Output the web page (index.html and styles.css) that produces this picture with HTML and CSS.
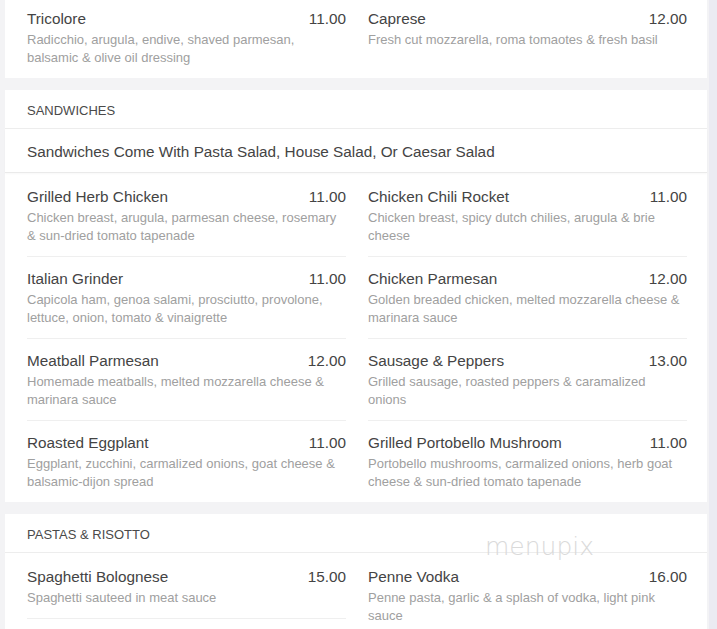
FILE: index.html
```html
<!DOCTYPE html>
<html>
<head>
<meta charset="utf-8">
<link rel="stylesheet" href="styles.css">
</head>
<body>
<div class="card card--top">
  <div class="grid">
    <div class="item">
      <div class="row"><span class="name">Tricolore</span><span class="price">11.00</span></div>
      <div class="desc">Radicchio, arugula, endive, shaved parmesan, balsamic &amp; olive oil dressing</div>
    </div>
    <div class="item">
      <div class="row"><span class="name">Caprese</span><span class="price">12.00</span></div>
      <div class="desc">Fresh cut mozzarella, roma tomaotes &amp; fresh basil</div>
    </div>
  </div>
</div>

<div class="card">
  <div class="head">SANDWICHES</div>
  <div class="sub">Sandwiches Come With Pasta Salad, House Salad, Or Caesar Salad</div>
  <div class="grid">
    <div class="item">
      <div class="row"><span class="name">Grilled Herb Chicken</span><span class="price">11.00</span></div>
      <div class="desc">Chicken breast, arugula, parmesan cheese, rosemary &amp; sun-dried tomato tapenade</div>
    </div>
    <div class="item">
      <div class="row"><span class="name">Chicken Chili Rocket</span><span class="price">11.00</span></div>
      <div class="desc">Chicken breast, spicy dutch chilies, arugula &amp; brie cheese</div>
    </div>
    <div class="item">
      <div class="row"><span class="name">Italian Grinder</span><span class="price">11.00</span></div>
      <div class="desc">Capicola ham, genoa salami, prosciutto, provolone, lettuce, onion, tomato &amp; vinaigrette</div>
    </div>
    <div class="item">
      <div class="row"><span class="name">Chicken Parmesan</span><span class="price">12.00</span></div>
      <div class="desc">Golden breaded chicken, melted mozzarella cheese &amp; marinara sauce</div>
    </div>
    <div class="item">
      <div class="row"><span class="name">Meatball Parmesan</span><span class="price">12.00</span></div>
      <div class="desc">Homemade meatballs, melted mozzarella cheese &amp; marinara sauce</div>
    </div>
    <div class="item">
      <div class="row"><span class="name">Sausage &amp; Peppers</span><span class="price">13.00</span></div>
      <div class="desc">Grilled sausage, roasted peppers &amp; caramalized onions</div>
    </div>
    <div class="item">
      <div class="row"><span class="name">Roasted Eggplant</span><span class="price">11.00</span></div>
      <div class="desc">Eggplant, zucchini, carmalized onions, goat cheese &amp; balsamic-dijon spread</div>
    </div>
    <div class="item">
      <div class="row"><span class="name">Grilled Portobello Mushroom</span><span class="price">11.00</span></div>
      <div class="desc">Portobello mushrooms, carmalized onions, herb goat cheese &amp; sun-dried tomato tapenade</div>
    </div>
  </div>
</div>

<div class="card card--pasta">
  <div class="head">PASTAS &amp; RISOTTO</div>
  <div class="grid">
    <div class="item item--sep">
      <div class="row"><span class="name">Spaghetti Bolognese</span><span class="price">15.00</span></div>
      <div class="desc">Spaghetti sauteed in meat sauce</div>
    </div>
    <div class="item item--sep">
      <div class="row"><span class="name">Penne Vodka</span><span class="price">16.00</span></div>
      <div class="desc">Penne pasta, garlic &amp; a splash of vodka, light pink sauce</div>
    </div>
  </div>
  <div class="watermark">menupix</div>
</div>
</body>
</html>
```

FILE: styles.css
```css
html {
  background: #ebebf2;
}
body {
  margin: 0 8px 0 0;
  padding: 0 2px 0 5px;
  min-height: 100vh;
  background: #f3f3f5;
  font-family: "Liberation Sans", Arial, sans-serif;
  color: #444;
}
.card {
  background: #fff;
  margin-bottom: 12px;
  position: relative;
}
.card--top .grid {
  padding-top: 0;
}
.card--top .item {
  padding-top: 9px;
}
.head {
  height: 35px;
  padding-top: 3px;
  line-height: 36px;
  padding-left: 22px;
  font-size: 13px;
  color: #4a4a4a;
  border-bottom: 1px solid #ededed;
}
.sub {
  padding: 13px 22px 10px;
  line-height: 20px;
  font-size: 15.3px;
  color: #444;
  border-bottom: 1px solid #eaeaea;
  box-shadow: 0 1px 2px rgba(0,0,0,0.03);
}
.grid {
  display: grid;
  grid-template-columns: 319px 319px;
  column-gap: 22px;
  padding: 2px 20px 0 22px;
  align-items: start;
}
.item {
  padding: 12px 0 11px;
  border-bottom: 1px solid #efefef;
}
.item:nth-last-child(-n+2) {
  border-bottom: none;
}
.item.item--sep {
  border-bottom: 1px solid #efefef;
}
.row {
  display: flex;
  justify-content: space-between;
  line-height: 20px;
  font-size: 15.3px;
  color: #444;
}
.desc {
  margin-top: 2px;
  font-size: 13px;
  line-height: 18px;
  color: #a0a0a0;
  padding-right: 4px;
}
.watermark {
  position: absolute;
  left: 480px;
  top: 18px;
  font-family: "DejaVu Sans", sans-serif;
  font-weight: 200;
  font-size: 25px;
  color: #dadada;
}
```
